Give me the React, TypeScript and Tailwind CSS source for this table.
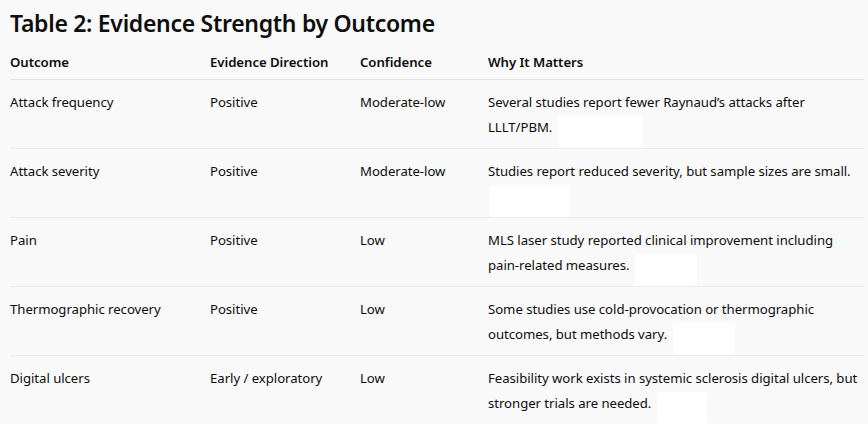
const rows = [
  {
    outcome: "Attack frequency",
    direction: "Positive",
    confidence: "Moderate-low",
    why: "Several studies report fewer Raynaud\u2019s attacks after LLLT/PBM.",
    pill: "w-[85px]",
  },
  {
    outcome: "Attack severity",
    direction: "Positive",
    confidence: "Moderate-low",
    why: "Studies report reduced severity, but sample sizes are small.",
    pill: "w-[80px]",
  },
  {
    outcome: "Pain",
    direction: "Positive",
    confidence: "Low",
    why: "MLS laser study reported clinical improvement including pain-related measures.",
    pill: "w-[62px]",
  },
  {
    outcome: "Thermographic recovery",
    direction: "Positive",
    confidence: "Low",
    why: "Some studies use cold-provocation or thermographic outcomes, but methods vary.",
    pill: "w-[62px]",
  },
  {
    outcome: "Digital ulcers",
    direction: "Early / exploratory",
    confidence: "Low",
    why: "Feasibility work exists in systemic sclerosis digital ulcers, but stronger trials are needed.",
    pill: "w-[50px]",
  },
]

export default function App() {
  return (
    <div className="w-[868px] h-[424px] overflow-hidden bg-[#f9f9f9] pl-[10px] pt-[6px] text-[#0d0d0d] font-['Noto_Sans',_sans-serif]">
      <h2 className="text-[23px] leading-[34px] font-semibold tracking-[-0.3px]">
        Table 2: Evidence Strength by Outcome
      </h2>

      <div className="mt-[8px] w-[854px] text-[13.2px] leading-[25px] tracking-[-0.05px]">
        {/* header */}
        <div className="grid grid-cols-[200px_150px_128px_1fr] border-b border-[#e3e3e3] pb-[4px] pt-[2px] font-semibold">
          <div>Outcome</div>
          <div>Evidence Direction</div>
          <div>Confidence</div>
          <div>Why It Matters</div>
        </div>

        {rows.map((r) => (
          <div
            key={r.outcome}
            className="grid grid-cols-[200px_150px_128px_1fr] border-b border-[#ececec] pt-[10px] pb-[8px]"
          >
            <div>{r.outcome}</div>
            <div>{r.direction}</div>
            <div>{r.confidence}</div>
            <div className="h-[50px] pr-[4px]">
              {r.why}{" "}
              <span
                className={`inline-block ${r.pill} h-[32px] -mb-[14px] ml-[2px] rounded-[4px] bg-white align-top relative top-[1px]`}
              />
            </div>
          </div>
        ))}
      </div>
    </div>
  )
}
